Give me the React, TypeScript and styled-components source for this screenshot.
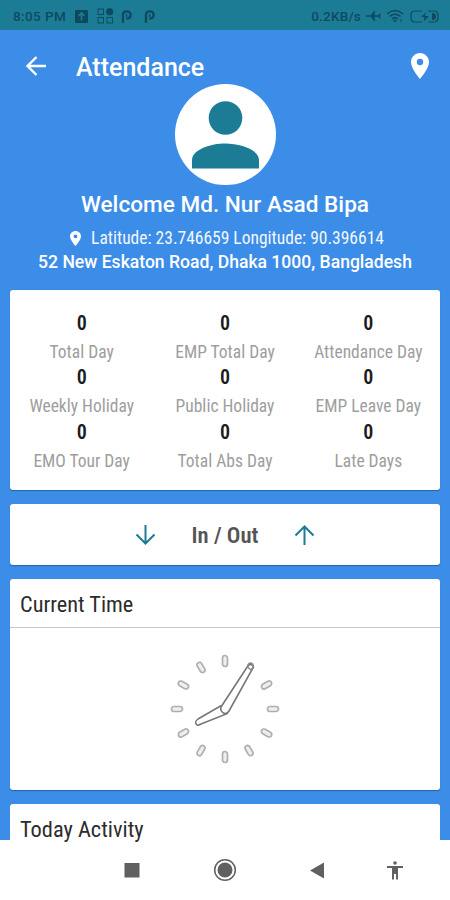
import React from 'react';
import styled, { createGlobalStyle } from 'styled-components';

const TEAL = '#1d7c95';
const INK = '#0d4a60';

const GlobalStyle = createGlobalStyle`
  * { box-sizing: border-box; }
  body { margin: 0; background: #fff; font-family: Roboto, sans-serif; }
  svg { display: block; flex: none; }
`;

const Screen = styled.div`
  width: 450px;
  height: 900px;
  display: flex;
  flex-direction: column;
  overflow: hidden;
  background: #3c8de8;
`;

const StatusBar = styled.div`
  height: 30px;
  flex: none;
  display: flex;
  align-items: center;
  justify-content: space-between;
  padding: 2px 11px 0 13px;
  background: ${TEAL};
  color: ${INK};
`;

const StatusGroup = styled.div<{ $gap: number }>`
  display: flex;
  align-items: center;
  gap: ${p => p.$gap}px;
`;

const StatusText = styled.span<{ $spacing: number }>`
  font-size: 13.5px;
  font-weight: 500;
  line-height: 16px;
  letter-spacing: ${p => p.$spacing}px;
  white-space: nowrap;
`;

const Parking = styled.div`
  display: flex;
  gap: 12px;
  margin-left: -2px;
`;

const AppBar = styled.header`
  height: 54px;
  flex: none;
  display: flex;
  align-items: center;
  padding: 18px 21px 0 24px;
  color: #fff;
`;

const Title = styled.h1`
  flex: 1;
  margin: 3px 0 0 28px;
  font-size: 25px;
  font-weight: 500;
  line-height: 30px;
`;

const Profile = styled.section`
  height: 206px;
  flex: none;
  display: flex;
  flex-direction: column;
  align-items: center;
  color: #fff;
  white-space: nowrap;
`;

const Avatar = styled.div`
  width: 101px;
  height: 101px;
  flex: none;
  display: flex;
  justify-content: center;
  padding-top: 17px;
  border-radius: 50%;
  background: #fff;
`;

const Welcome = styled.div`
  margin-top: 5px;
  font-size: 22.6px;
  font-weight: 500;
  line-height: 30px;
`;

const Coordinates = styled.div`
  display: flex;
  align-items: center;
  gap: 10px;
  margin: 6px 0 0 4px;
`;

const Address = styled.div`
  font-size: 17.57px;
  font-weight: 500;
  line-height: 24px;
`;

const Cards = styled.main`
  z-index: 1;
  flex: 1;
  min-height: 0;
  display: flex;
  flex-direction: column;
  gap: 14px;
  padding: 0 10px;
`;

const Card = styled.section<{ $height: number }>`
  height: ${p => p.$height}px;
  flex: none;
  border-radius: 3px;
  background: #fff;
  box-shadow: 0 1px 1px rgba(0, 50, 110, 0.45);
`;

const PeekingCard = styled(Card)`
  padding: 14px 10px 0;
  border-radius: 3px 3px 0 0;
  box-shadow: none;
`;

const Stats = styled(Card)`
  display: grid;
  grid-template-columns: repeat(3, 1fr);
  grid-auto-rows: 54.4px;
  padding-top: 19px;
`;

const Stat = styled.div`
  text-align: center;
  white-space: nowrap;
`;

const Condensed = styled.span<{ $size: number; $weight?: number; $color: string; $line: number }>`
  display: block;
  font-family: 'Roboto Condensed', Roboto, sans-serif;
  font-stretch: 75%;
  font-size: ${p => p.$size}px;
  font-weight: ${p => p.$weight ?? 400};
  line-height: ${p => p.$line}px;
  color: ${p => p.$color};
`;

const InOut = styled(Card)`
  display: flex;
  align-items: center;
  justify-content: center;
  gap: 36px;
`;

const InOutLabel = styled.div`
  padding-top: 3px;
`;

const CardHeading = styled.div`
  height: 49px;
  padding: 14px 10px 0;
  border-bottom: 1px solid #c6c6c6;
`;

const ClockFace = styled.div`
  display: flex;
  justify-content: center;
  padding-top: 22px;
`;

const NavBar = styled.nav`
  height: 60px;
  flex: none;
  display: grid;
  grid-template-columns: 93px 93px 91px 66px;
  justify-items: center;
  align-items: center;
  padding: 0 0 0 85px;
  background: #fff;
`;

const stats = [
  'Total Day', 'EMP Total Day', 'Attendance Day',
  'Weekly Holiday', 'Public Holiday', 'EMP Leave Day',
  'EMO Tour Day', 'Total Abs Day', 'Late Days',
];

const Pin = ({ width, height }: { width: number; height: number }) => (
  <svg width={width} height={height} viewBox="5 2 14 20" preserveAspectRatio="none" fill="#fff">
    <path d="M12 2C8.13 2 5 5.13 5 9c0 5.25 7 13 7 13s7-7.75 7-13c0-3.87-3.13-7-7-7zm0 9.5a2.5 2.5 0 1 1 0-5 2.5 2.5 0 0 1 0 5z" />
  </svg>
);

const VerticalArrow = ({ up }: { up?: boolean }) => (
  <svg width="21" height="20" viewBox="0 0 20 20" fill="none" stroke={TEAL} strokeWidth="2">
    <path d={up ? 'M10 20V2M1 10.5L10 1.5L19 10.5' : 'M10 0V18M1 9.5L10 18.5L19 9.5'} />
  </svg>
);

const ParkingMark = () => (
  <svg width="11" height="13" viewBox="0 0 11 13" fill="none" stroke={INK} strokeWidth="2.4">
    <path d="M2 12.8V4.5C2 2.3 3.3 1.4 5.7 1.4C8.3 1.4 9.6 2.6 9.6 4.8C9.6 7.2 8 8.6 5.4 8.6" />
    <path d="M5.6 4V7" strokeWidth="1.2" />
  </svg>
);

const Clock = () => (
  <svg width="112" height="118" viewBox="-56 -59 112 118" fill="none">
    {Array.from({ length: 12 }, (_, i) => i).filter(i => i !== 1).map(i => (
      <rect key={i} x="-2.5" y="-53.5" width="5" height="11" rx="2.5" stroke="#b0b0b0" strokeWidth="1.7"
        fill="#eee" transform={`rotate(${i * 30})`} />
    ))}
    <path d="M-4.5-3L-27 10Q-31 13-28.5 15.5Q-27.5 17-24 15L2 4.8Z" stroke="#777" strokeWidth="1.5" fill="#fff" />
    <path d="M-4-2L22.5-42.5Q26-47 28.5-42L4 2Q2 5.5-1.5 4Q-5 2-4-2Z" stroke="#777" strokeWidth="1.6" fill="#fff" />
    <path d="M22.5-42Q22.5-45.5 25.5-46Q29-45.5 28.3-42L26-39L22.5-42" stroke="#888" strokeWidth="1.3" />
  </svg>
);

export default function App() {
  return (
    <>
      <GlobalStyle />
      <Screen>
        <StatusBar>
          <StatusGroup $gap={9}>
            <StatusText $spacing={0.4}>8:05 PM</StatusText>
            <svg width="13" height="13" viewBox="0 0 13 13">
              <rect width="13" height="13" rx="1" fill={INK} />
              <path d="M6.5 10.5V4M3.5 6L6.5 3L9.5 6" stroke={TEAL} strokeWidth="1.6" fill="none" />
            </svg>
            <svg width="17" height="16" viewBox="0 0 17 16" fill="none" stroke={INK}>
              <rect x="1" y="1" width="5.5" height="5.5" />
              <circle cx="12.7" cy="3.8" r="3.2" fill={INK} />
              <rect x="1" y="9.5" width="5.5" height="5.5" />
              <rect x="10" y="9.5" width="5.5" height="5.5" />
            </svg>
            <Parking>
              <ParkingMark />
              <ParkingMark />
            </Parking>
          </StatusGroup>
          <StatusGroup $gap={5}>
            <StatusText $spacing={0.2}>0.2KB/s</StatusText>
            <svg width="15" height="12" viewBox="0 0 15 12" fill={INK}>
              <path d="M0 5.2L5 5.2L8 1H9.3L8.3 5.2H12L13.5 3.5H14.7L14 6L14.7 8.5H13.5L12 6.8H8.3L9.3 11H8L5 6.8H0Z" />
            </svg>
            <svg width="19" height="14" viewBox="0 0 19 14" fill="none" stroke={INK} strokeWidth="1.5">
              <path d="M1 5Q9-2 17 5M3.5 7.5Q9 3 14.5 7.5M6 10Q9 7.7 12 10" />
              <path d="M9 13L7.7 11.4Q9 10.5 10.3 11.4ZM15 10V13" strokeWidth="1" />
            </svg>
            <svg width="29" height="13" viewBox="0 0 29 13" fill="none" stroke={INK} strokeWidth="1.2">
              <path d="M12 1H5Q1 1 1 5V8Q1 12 5 12H12M18 1H24Q28 1 28 5V8Q28 12 24 12H18" />
              <path d="M16 2L11 7H14.5L13.5 11.5L19 6H15Z" fill={INK} stroke="none" />
              <path d="M22 3H23Q26 3 26 6.5Q26 10 23 10H22Z" fill={INK} stroke="none" />
            </svg>
          </StatusGroup>
        </StatusBar>
        <AppBar>
          <svg width="24" height="20" viewBox="0 0 24 20" fill="none" stroke="#fff" strokeWidth="2.4">
            <path d="M22 10H4M12.5 1L3.5 10L12.5 19" />
          </svg>
          <Title>Attendance</Title>
          <Pin width={18} height={26} />
        </AppBar>
        <Profile>
          <Avatar>
            <svg width="67" height="68" viewBox="0 0 67 68" fill={TEAL}>
              <circle cx="33.5" cy="17" r="16.8" />
              <path d="M0 67.5V59C0 48.5 19 42.5 33.5 42.5S67 48.5 67 59V67.5Z" />
            </svg>
          </Avatar>
          <Welcome>Welcome Md. Nur Asad Bipa</Welcome>
          <Coordinates>
            <Pin width={11} height={15} />
            <Condensed $size={17.5} $color="#f2f7fe" $line={24}>Latitude: 23.746659 Longitude: 90.396614</Condensed>
          </Coordinates>
          <Address>52 New Eskaton Road, Dhaka 1000, Bangladesh</Address>
        </Profile>
        <Cards>
          <Stats $height={200}>
            {stats.map(label => (
              <Stat key={label}>
                <Condensed $size={20} $weight={600} $color="#1c1c1c" $line={28}>0</Condensed>
                <Condensed $size={17.5} $color="#9e9e9e" $line={30}>{label}</Condensed>
              </Stat>
            ))}
          </Stats>
          <InOut $height={61}>
            <VerticalArrow />
            <InOutLabel>
              <Condensed $size={22.6} $weight={600} $color="#555" $line={30}>In / Out</Condensed>
            </InOutLabel>
            <VerticalArrow up />
          </InOut>
          <Card $height={211}>
            <CardHeading>
              <Condensed $size={22.3} $color="#2c2c2c" $line={22}>Current Time</Condensed>
            </CardHeading>
            <ClockFace><Clock /></ClockFace>
          </Card>
          <PeekingCard $height={36}>
            <Condensed $size={22.4} $color="#2c2c2c" $line={22}>Today Activity</Condensed>
          </PeekingCard>
        </Cards>
        <NavBar>
          <svg width="16" height="16" viewBox="0 0 16 16"><rect x="0.5" y="1" width="15" height="14.5" fill="#606060" /></svg>
          <svg width="24" height="24" viewBox="0 0 24 24">
            <circle cx="12" cy="12" r="10.3" fill="none" stroke="#606060" strokeWidth="1.5" />
            <circle cx="12" cy="12" r="7.5" fill="#606060" />
          </svg>
          <svg width="16" height="17" viewBox="0 0 16 17"><path d="M1 8.5L15 0.5V16.5Z" fill="#606060" /></svg>
          <svg width="18" height="19" viewBox="0 0 18 19" fill="#606060">
            <circle cx="9" cy="2" r="1.8" />
            <path d="M1 5H17V7H12V18.5H10V13H8V18.5H6V7H1Z" />
          </svg>
        </NavBar>
      </Screen>
    </>
  );
}
